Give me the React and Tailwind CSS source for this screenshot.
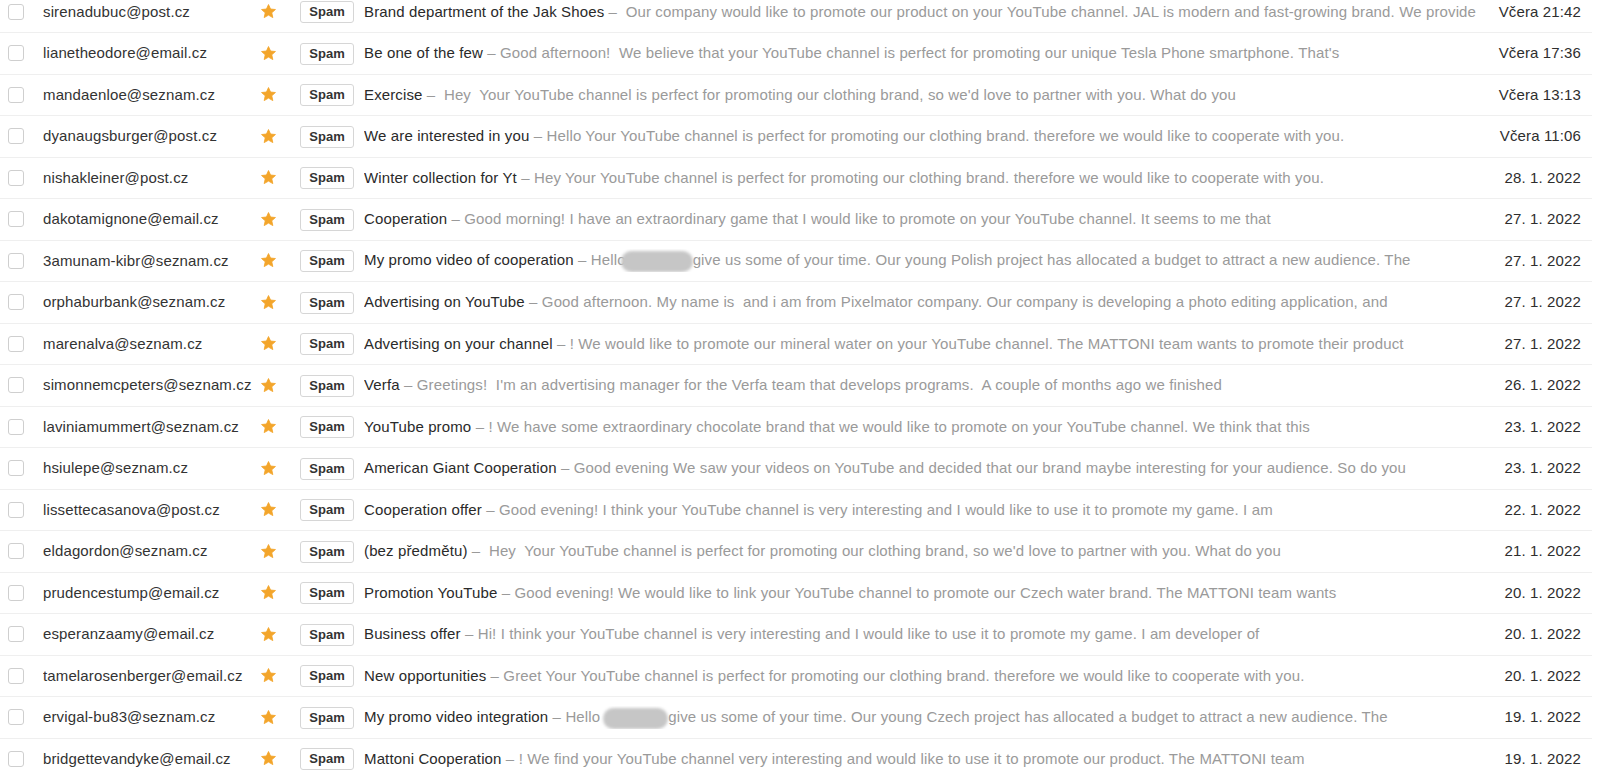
import React from 'react';

const mails = [
  ['sirenadubuc@post.cz', 'Brand department of the Jak Shoes', ' Our company would like to promote our product on your YouTube channel. JAL is modern and fast-growing brand. We provide', 'Včera 21:42'],
  ['lianetheodore@email.cz', 'Be one of the few', 'Good afternoon!  We believe that your YouTube channel is perfect for promoting our unique Tesla Phone smartphone. That\'s', 'Včera 17:36'],
  ['mandaenloe@seznam.cz', 'Exercise', ' Hey  Your YouTube channel is perfect for promoting our clothing brand, so we\'d love to partner with you. What do you', 'Včera 13:13'],
  ['dyanaugsburger@post.cz', 'We are interested in you', 'Hello Your YouTube channel is perfect for promoting our clothing brand. therefore we would like to cooperate with you.', 'Včera 11:06'],
  ['nishakleiner@post.cz', 'Winter collection for Yt', 'Hey Your YouTube channel is perfect for promoting our clothing brand. therefore we would like to cooperate with you.', '28. 1. 2022'],
  ['dakotamignone@email.cz', 'Cooperation', 'Good morning! I have an extraordinary game that I would like to promote on your YouTube channel. It seems to me that', '27. 1. 2022'],
  ['3amunam-kibr@seznam.cz', 'My promo video of cooperation', { before: 'Hello', overlap: true, after: 'give us some of your time. Our young Polish project has allocated a budget to attract a new audience. The' }, '27. 1. 2022'],
  ['orphaburbank@seznam.cz', 'Advertising on YouTube', 'Good afternoon. My name is  and i am from Pixelmator company. Our company is developing a photo editing application, and', '27. 1. 2022'],
  ['marenalva@seznam.cz', 'Advertising on your channel', '! We would like to promote our mineral water on your YouTube channel. The MATTONI team wants to promote their product', '27. 1. 2022'],
  ['simonnemcpeters@seznam.cz', 'Verfa', 'Greetings!  I\'m an advertising manager for the Verfa team that develops programs.  A couple of months ago we finished', '26. 1. 2022'],
  ['laviniamummert@seznam.cz', 'YouTube promo', '! We have some extraordinary chocolate brand that we would like to promote on your YouTube channel. We think that this', '23. 1. 2022'],
  ['hsiulepe@seznam.cz', 'American Giant Cooperation', 'Good evening We saw your videos on YouTube and decided that our brand maybe interesting for your audience. So do you', '23. 1. 2022'],
  ['lissettecasanova@post.cz', 'Cooperation offer', 'Good evening! I think your YouTube channel is very interesting and I would like to use it to promote my game. I am', '22. 1. 2022'],
  ['eldagordon@seznam.cz', '(bez předmětu)', ' Hey  Your YouTube channel is perfect for promoting our clothing brand, so we\'d love to partner with you. What do you', '21. 1. 2022'],
  ['prudencestump@email.cz', 'Promotion YouTube', 'Good evening! We would like to link your YouTube channel to promote our Czech water brand. The MATTONI team wants', '20. 1. 2022'],
  ['esperanzaamy@email.cz', 'Business offer', 'Hi! I think your YouTube channel is very interesting and I would like to use it to promote my game. I am developer of', '20. 1. 2022'],
  ['tamelarosenberger@email.cz', 'New opportunities', 'Greet Your YouTube channel is perfect for promoting our clothing brand. therefore we would like to cooperate with you.', '20. 1. 2022'],
  ['ervigal-bu83@seznam.cz', 'My promo video integration', { before: 'Hello', overlap: false, after: 'give us some of your time. Our young Czech project has allocated a budget to attract a new audience. The' }, '19. 1. 2022'],
  ['bridgettevandyke@email.cz', 'Mattoni Cooperation', '! We find your YouTube channel very interesting and would like to use it to promote our product. The MATTONI team', '19. 1. 2022'],
];

function StarIcon() {
  return (
    <svg width="17" height="17" viewBox="0 0 24 24">
      <path
        d="M12 2.2l2.9 6.3 6.9.7-5.2 4.6 1.5 6.8L12 17.1l-6.1 3.5 1.5-6.8-5.2-4.6 6.9-.7z"
        fill="#f3a52b"
        stroke="#f3a52b"
        strokeWidth="1.2"
        strokeLinejoin="round"
      />
    </svg>
  );
}

// blurred-out name in the preview
function Preview({ text }) {
  if (typeof text === 'string') return <span className="text-[#9a9a9a]">{text}</span>;
  return (
    <span className="text-[#9a9a9a]">
      {text.before}
      {text.overlap ? (
        <span className="inline-block align-middle w-[72px] h-[21px] -ml-[5px] rounded-full bg-[#c6c6c6] blur-[1.5px]"></span>
      ) : (
        <span className="inline-block align-middle w-[65px] h-[21px] ml-[3px] rounded-full bg-[#c6c6c6] blur-[1.5px]"></span>
      )}
      {text.after}
    </span>
  );
}

function Row({ mail }) {
  const [from, subject, preview, date] = mail;
  return (
    <div className="h-[41.5px] flex items-center border-b border-[#efefef] text-[15px] tracking-[0.13px]">
      <div className="w-[43px] pl-[8px] shrink-0 flex items-center">
        <div className="w-[16px] h-[16px] rounded-[3px] border border-[#cfcfcf] bg-white"></div>
      </div>
      <div className="w-[215px] shrink-0 text-[#333] whitespace-nowrap overflow-hidden">{from}</div>
      <div className="w-[42px] shrink-0 flex items-center pl-[2px]">
        <StarIcon />
      </div>
      <div className="w-[64px] shrink-0">
        <span className="inline-flex items-center justify-center w-[54px] h-[22px] border border-[#d6d6d6] rounded-[3px] text-[13px] tracking-normal font-bold text-[#333] bg-white">
          Spam
        </span>
      </div>
      <div className="flex-1 min-w-0 whitespace-pre overflow-hidden">
        <span className="text-[#2a2a2a]">{subject}</span>
        <span className="text-[#9a9a9a]"> – </span>
        <Preview text={preview} />
      </div>
      <div className="w-[110px] shrink-0 text-right pr-[11px] text-[#2e2e2e] whitespace-nowrap">{date}</div>
    </div>
  );
}

export default function App() {
  return (
    <div
      className="w-[1600px] h-[779px] overflow-hidden bg-white"
      style={{ fontFamily: '"Liberation Sans", Arial, sans-serif' }}
    >
      <div className="w-[1592px] -mt-[8.5px]">
        {mails.map((m, i) => (
          <Row key={i} mail={m} />
        ))}
      </div>
    </div>
  );
}
